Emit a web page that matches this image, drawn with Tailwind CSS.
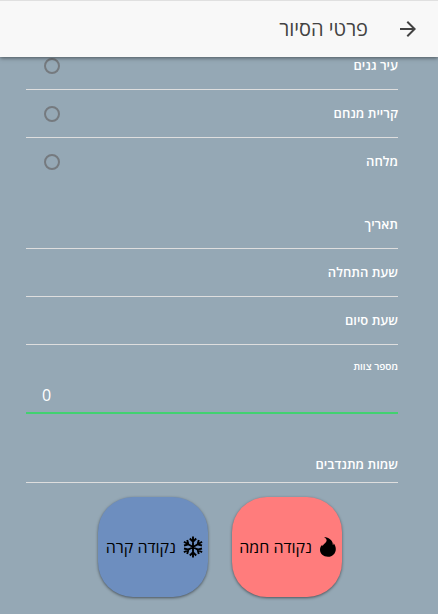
<!DOCTYPE html>
<html lang="he" dir="rtl">
<head>
<meta charset="utf-8">
<meta name="viewport" content="width=device-width, initial-scale=1">
<title>פרטי הסיור</title>
<script src="https://cdn.jsdelivr.net/npm/@tailwindcss/browser@4"></script>
</head>
<body class="min-h-screen overflow-x-hidden bg-[#95a8b5] font-['Open_Sans','Noto_Sans',sans-serif] text-white">
<header class="sticky top-0 z-10 flex h-[57px] items-center gap-7 border-t border-[#e0e0e0] bg-[#f8f8f8] ps-[18px] shadow-[0_1px_4px_rgba(0,0,0,0.5)]">
  <button type="button" aria-label="חזרה" class="flex size-6 items-center justify-center text-[#424242]">
    <svg viewBox="0 0 24 24" class="size-6" fill="currentColor" aria-hidden="true"><path d="M12 4l-1.41 1.41L16.17 11H4v2h12.17l-5.58 5.59L12 20l8-8z"/></svg>
  </button>
  <h1 class="text-xl text-[#424242]">פרטי הסיור</h1>
</header>
<main>
  <form class="ps-10 pe-[26px]">
    <fieldset class="-mt-[15px] text-[13px] font-semibold">
      <label class="flex h-12 items-center justify-between border-b border-[#dedede] pe-[18px]">
        <span>עיר גנים</span>
        <input type="radio" name="area" class="size-4 appearance-none rounded-full border-2 border-[#757a7f] checked:bg-[#757a7f]">
      </label>
      <label class="flex h-12 items-center justify-between border-b border-[#dedede] pe-[18px]">
        <span>קריית מנחם</span>
        <input type="radio" name="area" class="size-4 appearance-none rounded-full border-2 border-[#757a7f] checked:bg-[#757a7f]">
      </label>
      <label class="flex h-12 items-center justify-between pe-[18px]">
        <span>מלחה</span>
        <input type="radio" name="area" class="size-4 appearance-none rounded-full border-2 border-[#757a7f] checked:bg-[#757a7f]">
      </label>
    </fieldset>
    <div class="mt-[15px] text-[13px] font-semibold">
      <div class="flex h-12 items-center border-b border-[#dedede]">
        <label for="date">תאריך</label>
        <input id="date" type="text" class="min-w-0 flex-1 px-4 outline-none">
      </div>
      <div class="flex h-12 items-center border-b border-[#dedede]">
        <label for="start">שעת התחלה</label>
        <input id="start" type="text" class="min-w-0 flex-1 px-4 outline-none">
      </div>
      <div class="flex h-12 items-center border-b border-[#dedede]">
        <label for="end">שעת סיום</label>
        <input id="end" type="text" class="min-w-0 flex-1 px-4 outline-none">
      </div>
    </div>
    <div class="flex flex-col border-b-2 border-[#42d170] pt-[13px]">
      <label for="team" class="text-[10px] leading-4 font-semibold">מספר צוות</label>
      <input id="team" type="text" inputmode="numeric" dir="ltr" value="0" class="mt-1 h-[34px] w-full px-4 text-base outline-none">
    </div>
    <div class="mt-[34px] flex h-[35px] items-center border-b border-[#dedede]">
      <label for="names" class="text-[13px] font-semibold">שמות מתנדבים</label>
      <input id="names" type="text" class="min-w-0 flex-1 px-4 text-[13px] outline-none">
    </div>
  </form>
  <div class="flex justify-center gap-6 pt-[14px] pb-4 pl-[2px] text-base text-black">
    <button type="button" class="flex h-[100px] w-[110px] items-center gap-[6px] rounded-[35px] bg-[#ff7c7c] ps-1 whitespace-nowrap shadow-[0_1px_3px_rgba(0,0,0,0.5)]">
      <svg viewBox="1 0 20 22" class="h-[22px] w-5 shrink-0" fill="currentColor" aria-hidden="true"><path d="M7 1C12 1.500 16 4.500 15.800 8.500C15.800 9 16 9.300 16.300 8.800C16.600 8.300 16.600 7.800 16.600 7.300C18 9 18.800 11 18.800 13C18.800 17.500 15.500 20.800 11 20.800C6.400 20.800 3 17.700 3 13.800C3 11.500 4 9.800 5.200 8.700C5.200 9.300 5.300 9.800 5.700 10C6.500 8 9.800 6.500 9.600 4.300C9.400 3 8.500 1.800 7 1Z"/></svg>
      <span>נקודה חמה</span>
    </button>
    <button type="button" class="flex h-[100px] w-[110px] items-center gap-[6px] rounded-[35px] bg-[#6d8ebf] ps-1 whitespace-nowrap shadow-[0_1px_3px_rgba(0,0,0,0.5)]">
      <svg viewBox="0 0 22 22" class="size-[22px] shrink-0" fill="none" stroke="currentColor" stroke-width="1.900" aria-hidden="true"><path d="M11 0.500V21.500M7.800 2.500L11 5.700L14.200 2.500M7.800 19.500L11 16.300L14.200 19.500M1.900 5.750L20.100 16.250M2 9.500L6.400 8.400L5.200 4M20 12.500L15.600 13.600L16.800 18M1.900 16.250L20.100 5.750M5.200 18L6.400 13.600L2 12.500M16.800 4L15.600 8.400L20 9.500"/></svg>
      <span>נקודה קרה</span>
    </button>
  </div>
</main>
</body>
</html>
